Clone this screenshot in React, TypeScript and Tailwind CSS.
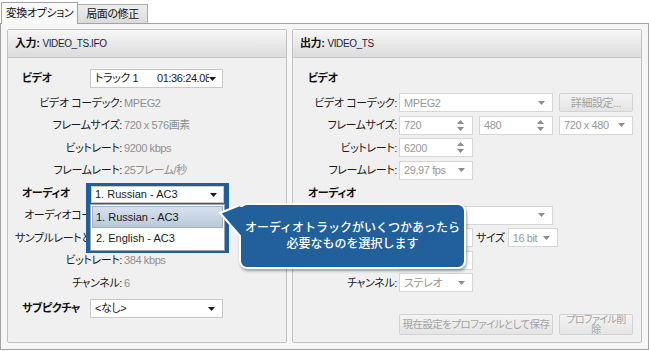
import React from "react";

const font =
  "font-['Liberation_Sans','Noto_Sans_CJK_JP',sans-serif] [font-feature-settings:'palt'] tracking-[-0.4px]";

function Arrow({ gray }: { gray?: boolean }) {
  return (
    <svg width="7" height="4" viewBox="0 0 7 4" className="shrink-0">
      <path d="M0 0h7L3.5 4z" fill={gray ? "#8d8d8d" : "#1a1a1a"} />
    </svg>
  );
}

function SpinArrows() {
  return (
    <svg width="7" height="11" viewBox="0 0 7 11" className="shrink-0">
      <path d="M0 4h7L3.5 0z M0 7h7L3.5 11z" fill="#8d8d8d" />
    </svg>
  );
}

function Select({
  className,
  children,
  disabled,
}: {
  className: string;
  children: React.ReactNode;
  disabled?: boolean;
}) {
  return (
    <div
      className={`flex h-[19px] shrink-0 items-center justify-between overflow-hidden border bg-white pl-[4px] pr-[7px] text-[11px] ${
        disabled
          ? "border-[#d6d6d6] text-[#979797]"
          : "border-[#c9c9c9] text-[#1a1a1a]"
      } ${className}`}
    >
      <span className="whitespace-nowrap">{children}</span>
      <Arrow gray={disabled} />
    </div>
  );
}

function Spin({ children }: { children: React.ReactNode }) {
  return (
    <div className="flex h-[19px] w-[74px] shrink-0 items-center justify-between border border-[#d6d6d6] bg-white pl-[4px] pr-[8px] text-[11px] text-[#979797]">
      <span>{children}</span>
      <SpinArrows />
    </div>
  );
}

function Btn({
  className,
  children,
}: {
  className: string;
  children: React.ReactNode;
}) {
  return (
    <div
      className={`flex shrink-0 items-center justify-center rounded-[2px] border border-[#d2d2d2] bg-gradient-to-b from-[#f4f4f4] to-[#e4e4e4] text-center text-[#a2a2a2] ${className}`}
    >
      {children}
    </div>
  );
}

function Row({
  label,
  lw,
  children,
}: {
  label: string;
  lw: string;
  children?: React.ReactNode;
}) {
  return (
    <div className="flex h-[22.5px] items-center">
      <div className={`shrink-0 whitespace-nowrap text-right text-[11px] text-[#1a1a1a] ${lw}`}>
        {label}
      </div>
      <div className="ml-[2px] flex items-center gap-[6px] text-[11px] text-[#8f8f8f]">
        {children}
      </div>
    </div>
  );
}

function Header({ bold, text }: { bold: string; text: string }) {
  return (
    <div className="flex h-[28px] items-center border-b border-[#c6c6c6] bg-gradient-to-b from-[#f7f7f7] to-[#dcdcdc] pl-[7px]">
      <span className="text-[11px] font-bold text-[#111]">{bold}</span>
      <span className="ml-[3px] text-[10px] text-[#23233f]">{text}</span>
    </div>
  );
}

export default function App() {
  return (
    <div className={`relative h-[351px] w-[649px] overflow-hidden bg-white ${font}`}>
      {/* tabs */}
      <div className="flex h-[23px] items-end pl-[1px]">
        <div className="relative z-10 mb-[-1px] flex h-[22px] w-[77px] items-center justify-center border border-b-0 border-[#a3a3a3] bg-[#f9f9f9] text-[11px] text-[#111]">
          変換オプション
        </div>
        <div className="flex h-[19px] w-[70px] items-center justify-center border border-l-0 border-b-0 border-[#ababab] bg-gradient-to-b from-[#efefef] to-[#dadada] text-[11px] text-[#111]">
          局面の修正
        </div>
      </div>

      {/* panel */}
      <div className="flex h-[327px] w-[649px] gap-[5px] border border-[#a3a3a3] bg-[#f6f6f6] pl-[6px] pt-[5px]">
        {/* input */}
        <div className="flex h-[314px] w-[280px] flex-col rounded-[2px] border border-[#c2c2c2] bg-[#f0f0f0]">
          <Header bold="入力:" text="VIDEO_TS.IFO" />
          <div className="flex flex-col pt-[9px]">
            <div className="flex h-[23px] items-center pl-[14px]">
              <div className="w-[68px] shrink-0 text-[11px] font-bold text-[#111]">ビデオ</div>
              <div className="flex h-[19px] w-[133px] items-center justify-between border border-[#c9c9c9] bg-white pl-[4px] pr-[6px] text-[11px] text-[#1a1a1a]">
                <div className="flex w-[115px] overflow-hidden whitespace-nowrap">
                  <span className="w-[62px] shrink-0">トラック 1</span>
                  <span>01:36:24.08</span>
                </div>
                <Arrow />
              </div>
            </div>
            <div className="h-[1.5px]" />
            <Row label="ビデオ コーデック:" lw="w-[114px]">MPEG2</Row>
            <Row label="フレームサイズ:" lw="w-[114px]">720 x 576画素</Row>
            <Row label="ビットレート:" lw="w-[114px]">9200 kbps</Row>
            <Row label="フレームレート:" lw="w-[114px]">25フレーム/秒</Row>
            <div className="flex h-[22.5px] items-center pl-[14px]">
              <div className="text-[11px] font-bold text-[#111]">オーディオ</div>
            </div>
            <Row label="オーディオコーデック:" lw="w-[114px]">AC3</Row>
            <Row label="サンプルレートとサイズ:" lw="w-[114px]">48000 Hz</Row>
            <Row label="ビットレート:" lw="w-[114px]">384 kbps</Row>
            <Row label="チャンネル:" lw="w-[114px]">6</Row>
            <div className="h-[3px]" />
            <div className="flex h-[23px] items-center pl-[14px]">
              <div className="w-[68px] shrink-0 text-[11px] font-bold text-[#111]">サブピクチャ</div>
              <Select className="w-[133px]">&lt;なし&gt;</Select>
            </div>
          </div>
        </div>

        {/* output */}
        <div className="flex h-[314px] w-[350px] flex-col rounded-[2px] border border-[#c2c2c2] bg-[#f0f0f0]">
          <Header bold="出力:" text="VIDEO_TS" />
          <div className="flex flex-col pt-[9px]">
            <div className="flex h-[23px] items-center pl-[15px]">
              <div className="text-[11px] font-bold text-[#111]">ビデオ</div>
            </div>
            <div className="h-[1.5px]" />
            <Row label="ビデオ コーデック:" lw="w-[104px]">
              <Select className="w-[154px]" disabled>MPEG2</Select>
              <Btn className="h-[19px] w-[74px] text-[11px]">詳細設定...</Btn>
            </Row>
            <Row label="フレームサイズ:" lw="w-[104px]">
              <Spin>720</Spin>
              <Spin>480</Spin>
              <Select className="w-[74px]" disabled>720 x 480</Select>
            </Row>
            <Row label="ビットレート:" lw="w-[104px]">
              <Spin>6200</Spin>
            </Row>
            <Row label="フレームレート:" lw="w-[104px]">
              <Select className="w-[74px]" disabled>29,97 fps</Select>
            </Row>
            <div className="flex h-[22.5px] items-center pl-[15px]">
              <div className="text-[11px] font-bold text-[#111]">オーディオ</div>
            </div>
            <Row label="オーディオ コーデック:" lw="w-[104px]">
              <Select className="w-[154px]" disabled>AC3</Select>
            </Row>
            <div className="flex h-[22.5px] items-center">
              <div className="w-[104px] shrink-0 text-right text-[11px] text-[#1a1a1a]">サンプルレート:</div>
              <div className="ml-[2px] flex items-center gap-[3px]">
                <Spin>48000</Spin>
                <span className="text-[11px] text-[#1a1a1a]">サイズ</span>
                <Select className="w-[50px] pr-[6px]" disabled>16 bit</Select>
              </div>
            </div>
            <Row label="ビットレート:" lw="w-[104px]">
              <Spin>192</Spin>
            </Row>
            <Row label="チャンネル:" lw="w-[104px]">
              <Select className="w-[74px]" disabled>ステレオ</Select>
            </Row>
            <div className="mt-[20px] flex gap-[6px] pl-[106px]">
              <Btn className="h-[21px] w-[154px] whitespace-nowrap text-[10.5px] tracking-[-0.6px]">
                現在設定をプロファイルとして保存
              </Btn>
              <Btn className="h-[21px] w-[74px] flex-col text-[10px] leading-[10px] tracking-[-0.6px]">
                <span>プロファイル削</span>
                <span>除</span>
              </Btn>
            </div>
          </div>
        </div>
      </div>

      {/* open audio dropdown, highlighted */}
      <div className="absolute left-[86px] top-[183px] flex h-[70px] w-[143px] flex-col bg-[#1f5f9c] px-[4px] pt-[3px] tracking-normal">
        <div className="mx-[1px] flex h-[17px] items-center justify-between border border-[#c9c9c9] bg-white pl-[3px] pr-[6px] text-[11px] text-[#1a1a1a]">
          <span>1. Russian - AC3</span>
          <Arrow />
        </div>
        <div className="mt-[1px] flex h-[47px] flex-col border border-[#9aa4ae] bg-white p-[1px] text-[11px] text-[#1a1a1a]">
          <div className="flex h-[22px] items-center border border-[#9fb1c6] bg-gradient-to-b from-[#d8e2ee] to-[#b9c8d9] pl-[3px]">
            1. Russian - AC3
          </div>
          <div className="flex h-[21px] items-center pl-[4px]">2. English - AC3</div>
        </div>
      </div>

      {/* callout */}
      <div className="absolute left-[239px] top-[203px] flex h-[66px] w-[227px] flex-col items-center justify-center rounded-[8px] border-2 border-white bg-[#22609b] text-[12px] leading-[16px] font-medium tracking-normal text-white shadow-[1px_2px_3px_rgba(0,0,0,0.35)] [font-feature-settings:normal]">
        <span>オーディオトラックがいくつかあったら</span>
        <span>必要なものを選択します</span>
      </div>
      <svg
        className="absolute left-[218px] top-[203px]"
        width="26"
        height="36"
        viewBox="0 0 26 36"
      >
        <path d="M22 2 L2 10 L22 33 Z" fill="#22609b" />
        <rect x="21" y="4" width="5" height="28" fill="#22609b" />
        <path d="M22 2 L2 10 L22 33" fill="none" stroke="#fff" strokeWidth="2" strokeLinejoin="miter" />
      </svg>
    </div>
  );
}
